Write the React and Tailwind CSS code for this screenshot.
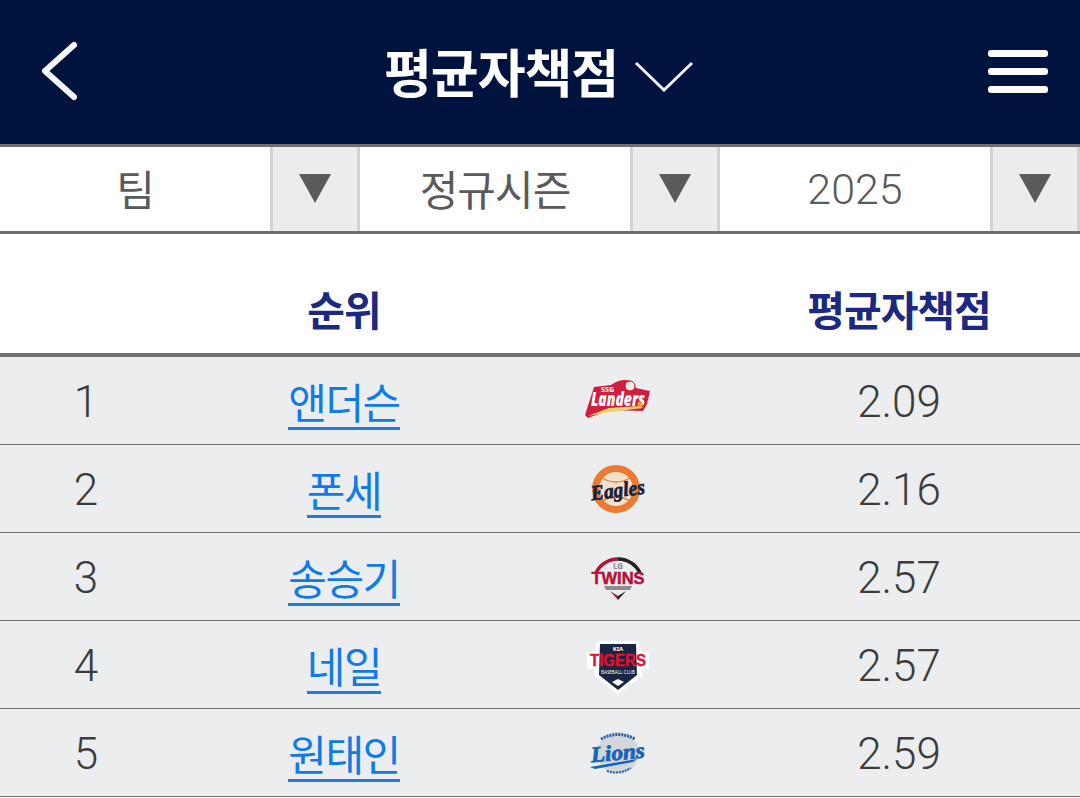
const FONT = "font-['Noto_Sans_CJK_KR','Noto_Sans',sans-serif]";
const NUM = "font-['Roboto','Noto_Sans_CJK_KR',sans-serif] font-light";

function Landers() {
  return (
    <svg width="66" height="42" viewBox="0 0 66 42">
      <path d="M9 8 L26 6 Q36 -1 46 2 L51 9 L65 12 L62 25 L58 32 L25 31 L3 39 L0 36 Z" fill="#cf1f3c" />
      <path d="M3 37 L24 29 L56 27 L58 29 L25 33 Z" fill="#f3d36b" />
      <circle cx="45" cy="7" r="5" fill="#f5ebe7" stroke="#c8102e" />
      <text x="16" y="13" fontSize="7" fontWeight="800" fill="#fff" fontFamily="Noto Sans, sans-serif">SSG</text>
      <text x="6" y="27" fontSize="19" fontWeight="900" fontStyle="italic" fill="#fff" fontFamily="Noto Sans, sans-serif" textLength="54" lengthAdjust="spacingAndGlyphs">Landers</text>
      <circle cx="55" cy="25" r="2.5" fill="#e9a321" />
    </svg>
  );
}

function Eagles() {
  return (
    <svg width="56" height="50" viewBox="0 0 56 50">
      <circle cx="26" cy="25" r="24" fill="#ec7a30" />
      <circle cx="26" cy="25" r="17" fill="#f6e2cc" />
      <path d="M12 14 Q26 22 40 14 M12 37 Q26 29 40 37" stroke="#ec7a30" strokeWidth="1.4" fill="none" />
      <text x="1" y="33" fontSize="21" fontWeight="700" fontStyle="italic" fill="#17203c" stroke="#17203c" strokeWidth="0.7" fontFamily="Liberation Serif, serif" textLength="54" lengthAdjust="spacingAndGlyphs" transform="rotate(-7 28 28)">Eagles</text>
    </svg>
  );
}

function Twins() {
  return (
    <svg width="56" height="44" viewBox="0 0 56 44">
      <path d="M6 17 A24 22 0 0 1 28 3" stroke="#b5123a" strokeWidth="3.5" fill="none" />
      <path d="M28 3 A24 22 0 0 1 50 17" stroke="#222" strokeWidth="3.5" fill="none" />
      <text x="28" y="13" fontSize="8" fontWeight="700" textAnchor="middle" fill="#888" fontFamily="Noto Sans, sans-serif">LG</text>
      <text x="28" y="28" fontSize="17" fontWeight="900" textAnchor="middle" fill="#b5123a" stroke="#b5123a" strokeWidth="0.5" fontFamily="Liberation Sans, sans-serif" textLength="53" lengthAdjust="spacingAndGlyphs">TWINS</text>
      <path d="M14 30 H42 L40 34 H16 Z" fill="#8b8b8b" />
      <path d="M20 35 L28 44 L28 40 Z" fill="#b5123a" />
      <path d="M36 35 L28 44 L28 40 Z" fill="#222" />
    </svg>
  );
}

function Tigers() {
  return (
    <svg width="62" height="53" viewBox="0 0 62 53">
      <path d="M10 0 H52 L54 11 H62 V28 H55 V35 L31 53 L7 35 V28 H0 V11 H8 Z" fill="#fff" />
      <path d="M13 3 H49 L50 34 L31 49 L12 34 Z" fill="#1a2542" />
      <text x="31" y="10" fontSize="6" fontWeight="700" textAnchor="middle" fill="#fff" fontFamily="Noto Sans, sans-serif">KIA</text>
      <text x="31" y="25" fontSize="16" fontWeight="900" textAnchor="middle" fill="#e2112f" stroke="#e2112f" strokeWidth="0.4" fontFamily="Liberation Sans, sans-serif" textLength="56" lengthAdjust="spacingAndGlyphs">TIGERS</text>
      <text x="31" y="33" fontSize="4.5" textAnchor="middle" fill="#fff" fontFamily="Noto Sans, sans-serif">BASEBALL CLUB</text>
      <path d="M25 41 L31 38 L37 41 L31 45 Z" fill="#fff" />
    </svg>
  );
}

function Lions() {
  return (
    <svg width="58" height="44" viewBox="0 0 58 44">
      <circle cx="29" cy="22" r="21" fill="#d3d6da" />
      <path d="M12 8 Q29 -1 46 8" stroke="#1d5fa8" strokeWidth="3" fill="none" strokeDasharray="2 1" />
      <text x="2" y="29" fontSize="22" fontWeight="700" fontStyle="italic" fill="#1565b5" stroke="#1565b5" strokeWidth="0.8" fontFamily="Liberation Serif, serif" textLength="54" lengthAdjust="spacingAndGlyphs" transform="rotate(-5 28 24)">Lions</text>
      <path d="M1 36 L48 28 L44 31 L6 38 Z" fill="#1565b5" />
      <path d="M18 40 Q30 44 42 37" stroke="#1d5fa8" strokeWidth="2" fill="none" strokeDasharray="2 1" />
    </svg>
  );
}

const rows = [
  ["1", "앤더슨", <Landers />, "2.09", "-mt-[2px]"],
  ["2", "폰세", <Eagles />, "2.16", ""],
  ["3", "송승기", <Twins />, "2.57", "mt-[2px]"],
  ["4", "네일", <Tigers />, "2.57", "mt-[5px]"],
  ["5", "원태인", <Lions />, "2.59", ""],
];

function Select({ label, num }) {
  return (
    <div className="flex w-[360px] h-full">
      <div className={`flex-1 flex items-center justify-center text-[#5a5a5a] ${num ? `text-[43px] ${NUM}` : "text-[42px] tracking-[-1px]"}`}>
        <span className={num ? "" : "-mt-[3px]"}>{label}</span>
      </div>
      <div className="w-[90px] border-x-[3px] border-[#d3d3d3] bg-[#ececec] flex items-center justify-center">
        <svg width="34" height="29" viewBox="0 0 34 29" className="-mt-[1px]">
          <path d="M1 0 H33 L17 29 Z" fill="#5a5a5a" />
        </svg>
      </div>
    </div>
  );
}

export default function App() {
  return (
    <div className={`w-[1080px] h-[798px] overflow-hidden bg-white ${FONT}`}>
      <header className="h-[144px] bg-[#00133f] flex items-center justify-between pl-[41px] pr-[32px] relative">
        <svg width="36" height="60" viewBox="0 0 36 60" fill="none" className="-mt-[2px]">
          <path d="M33 4 L4 30 L33 56" stroke="#f5f6fa" strokeWidth="6" strokeLinecap="round" strokeLinejoin="round" />
        </svg>
        <div className="absolute left-[384px] top-0 h-[144px] flex items-center">
          <span className="text-[52px] font-bold text-white tracking-[-1px] leading-none -mt-[2px]">평균자책점</span>
          <svg width="60" height="32" viewBox="0 0 60 32" fill="none" className="ml-[16px] mt-[8px]">
            <path d="M2 3 L30 30 L58 3" stroke="#eef0f6" strokeWidth="3" />
          </svg>
        </div>
        <div className="flex flex-col gap-[11px] w-[60px] -mt-[2px]">
          <div className="h-[7px] rounded-[3px] bg-white" />
          <div className="h-[7px] rounded-[3px] bg-white" />
          <div className="h-[7px] rounded-[3px] bg-white" />
        </div>
      </header>

      <div className="h-[90px] border-y-[3px] border-[#6f6f6f] flex">
        <Select label="팀" />
        <Select label="정규시즌" />
        <Select label="2025" num />
      </div>

      <div className="h-[119px] grid grid-cols-[172px_344px_204px_360px] items-end pb-[14px] text-[41px] font-bold text-[#1b2a80]">
        <div />
        <div className="text-center tracking-[-1px]">순위</div>
        <div />
        <div className="text-center tracking-[-1px] pr-[2px]">평균자책점</div>
      </div>
      <div className="h-[4px] bg-[#6f6f6f]" />

      {rows.map(([rank, name, logo, era, logoShift]) => (
        <div key={rank} className="h-[88px] bg-[#ebedef] border-b border-[#6f6f6f] grid grid-cols-[172px_344px_204px_360px] items-center text-[44px] text-[#3c3c3c]">
          <div className={`text-center leading-none mt-[3px] ${NUM}`}>{rank}</div>
          <div className="text-center leading-none mt-[3px]">
            <a className="inline-block text-[#0f7be8] text-[42px] leading-[52px] tracking-[-1.5px] border-b-[3px] border-[#2379dc]">{name}</a>
          </div>
          <div className={`flex justify-center items-center h-[60px] ${logoShift}`}>{logo}</div>
          <div className={`text-center leading-none mt-[3px] pr-[2px] ${NUM}`}>{era}</div>
        </div>
      ))}
    </div>
  );
}
